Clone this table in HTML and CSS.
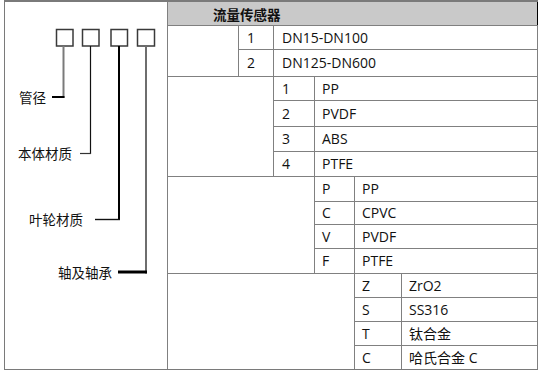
FILE: index.html
```html
<!DOCTYPE html>
<html lang="zh">
<head>
<meta charset="utf-8">
<title>流量传感器</title>
<link rel="stylesheet" href="styles.css">
</head>
<body>
<div class="frame">
  <div class="legend">
    <svg class="wires" width="162" height="367" viewBox="5 2 162 367">
      <g fill="none" stroke="#3a3a3a" stroke-width="1.5">
        <rect x="56.5" y="29.5" width="16.5" height="16.5"/>
        <rect x="82.5" y="29.5" width="16.5" height="16.5"/>
        <rect x="111" y="29.5" width="16.5" height="16.5"/>
        <rect x="137.5" y="29.5" width="17" height="16.5"/>
      </g>
      <line x1="63.5" y1="46" x2="63.5" y2="98" stroke="#7a7a7a" stroke-width="2"/>
      <line x1="52" y1="97" x2="64.5" y2="97" stroke="#000" stroke-width="2"/>
      <line x1="90.5" y1="46" x2="90.5" y2="154" stroke="#111" stroke-width="1.2"/>
      <line x1="80" y1="153.5" x2="91" y2="153.5" stroke="#333" stroke-width="1.2"/>
      <line x1="119" y1="46" x2="119" y2="220" stroke="#000" stroke-width="2"/>
      <line x1="95" y1="219.5" x2="120" y2="219.5" stroke="#111" stroke-width="1.4"/>
      <line x1="146" y1="46" x2="146" y2="273.5" stroke="#6e6e6e" stroke-width="2"/>
      <line x1="118" y1="272" x2="147" y2="272" stroke="#000" stroke-width="3"/>
    </svg>
    <span class="tag tag-1">管径</span>
    <span class="tag tag-2">本体材质</span>
    <span class="tag tag-3">叶轮材质</span>
    <span class="tag tag-4">轴及轴承</span>
  </div>
  <div class="spec">
    <div class="cell head">流量传感器</div>

    <div class="cell blank s1"></div>
    <div class="cell c2">1</div><div class="cell v3">DN15-DN100</div>
    <div class="cell c2">2</div><div class="cell v3">DN125-DN600</div>

    <div class="cell blank s2"></div>
    <div class="cell c3">1</div><div class="cell v4">PP</div>
    <div class="cell c3">2</div><div class="cell v4">PVDF</div>
    <div class="cell c3">3</div><div class="cell v4">ABS</div>
    <div class="cell c3">4</div><div class="cell v4">PTFE</div>

    <div class="cell blank s3"></div>
    <div class="cell c4">P</div><div class="cell v5">PP</div>
    <div class="cell c4">C</div><div class="cell v5">CPVC</div>
    <div class="cell c4">V</div><div class="cell v5">PVDF</div>
    <div class="cell c4">F</div><div class="cell v5">PTFE</div>

    <div class="cell blank s4"></div>
    <div class="cell c5">Z</div><div class="cell v6">ZrO2</div>
    <div class="cell c5">S</div><div class="cell v6">SS316</div>
    <div class="cell c5">T</div><div class="cell v6">钛合金</div>
    <div class="cell c5">C</div><div class="cell v6">哈氏合金 C</div>
  </div>
</div>
</body>
</html>
```

FILE: styles.css
```css
html, body {
  margin: 0;
  padding: 0;
  background: #fff;
}

body {
  width: 548px;
  height: 371px;
  overflow: hidden;
  font-family: "Open Sans", "Noto Sans CJK SC", sans-serif;
  font-size: 14px;
  color: #111;
}

.frame {
  margin-left: 4px;
  width: 534px;
  display: flex;
  border-top: 2px solid #7a7a7a;
  border-left: 1px solid #7a7a7a;
  border-bottom: 1px solid #7a7a7a;
  box-sizing: border-box;
  height: 370px;
}

.legend {
  position: relative;
  width: 162px;
  flex: none;
}

.wires {
  position: absolute;
  left: 0;
  top: 0;
}

.tag {
  position: absolute;
  font-family: "Noto Sans CJK SC", sans-serif;
  font-size: 13.5px;
  line-height: 16px;
  color: #111;
  white-space: nowrap;
}

/* label positions in the diagram (page x − 5, page y − 2 − 8) */
.tag-1 { left: 14px; top: 87px; }
.tag-2 { left: 13px; top: 143px; }
.tag-3 { left: 24px; top: 209px; }
.tag-4 { left: 53px; top: 262px; }

.spec {
  flex: none;
  display: grid;
  grid-template-columns: 70px 34px 40px 39px 46px 135px;
  grid-template-rows: 23px 23px 26px 23px 25px 24px 24px 24px 22px 23px 24px 23px 23px 23px 23px;
  gap: 1px;
  padding: 0 1px;
  background: #808080;
  width: 371px;
  box-sizing: border-box;
}

.cell {
  background: #fff;
  display: flex;
  align-items: center;
  padding-left: 7px;
  line-height: 16px;
  white-space: nowrap;
}

.head {
  grid-column: 1 / 7;
  background: #c9c9c9;
  font-family: "Noto Sans CJK SC", sans-serif;
  font-weight: bold;
  font-size: 13.5px;
  padding-left: 45px;
  margin-right: -1px;
  border-right: 1px solid #000;
}

.blank { padding: 0; }
.s1 { grid-column: 1 / 2; grid-row: span 2; }
.s2 { grid-column: 1 / 3; grid-row: span 4; }
.s3 { grid-column: 1 / 4; grid-row: span 4; }
.s4 { grid-column: 1 / 5; grid-row: span 4; }

.c2 { grid-column: 2 / 3; padding-left: 8px; }
.v3 { grid-column: 3 / 7; padding-left: 8px; }
.c3 { grid-column: 3 / 4; padding-left: 8px; }
.v4 { grid-column: 4 / 7; }
.c4 { grid-column: 4 / 5; }
.v5 { grid-column: 5 / 7; }
.c5 { grid-column: 5 / 6; }
.v6 { grid-column: 6 / 7; }
```
